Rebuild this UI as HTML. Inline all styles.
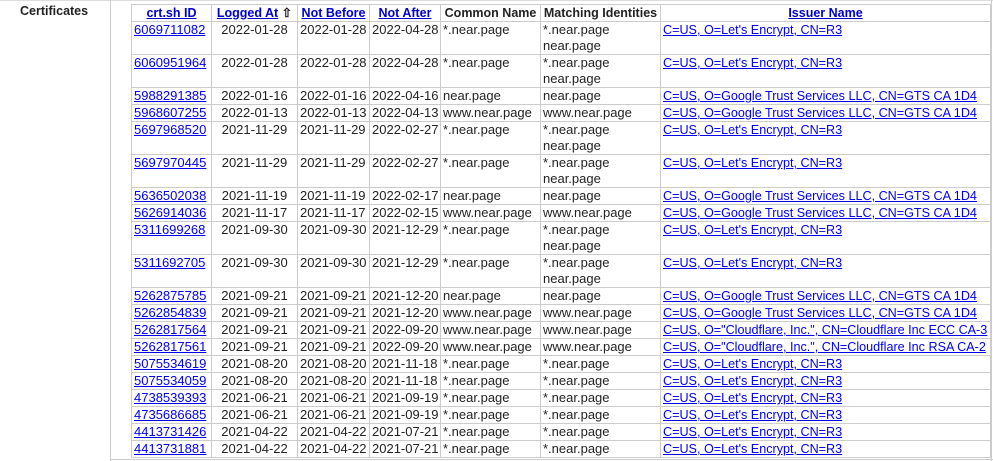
<!DOCTYPE html>
<html><head><meta charset="utf-8"><style>
html,body{margin:0;padding:0;background:#fff;}
body{width:993px;height:461px;position:relative;overflow:hidden;font-family:"Liberation Sans",Arial,sans-serif;font-size:13px;color:#222;}
.topline{position:absolute;left:0;top:0;width:993px;height:1px;background:#ddd;}
.vline{position:absolute;left:110px;top:0;width:1px;height:461px;background:#ccc;}
.rline{position:absolute;left:991px;top:0;width:1px;height:461px;background:#ccc;}
.bline{position:absolute;left:110px;top:459px;width:883px;height:1px;background:#ccc;}
.lbl{position:absolute;left:20px;top:4px;font-weight:bold;font-size:12.5px;}
table{position:absolute;left:131px;top:4px;border-collapse:collapse;table-layout:fixed;width:859px;}
td,th{border:1px solid #ccc;padding:0 2px;line-height:16px;vertical-align:top;white-space:nowrap;overflow:hidden;}
th{height:16px;font-weight:bold;font-size:12.5px;}
th a{color:#00c;}
a{color:#00e;text-decoration:underline;}
tr.s td{height:16px;}
tr.d td{height:32px;}
td.c{text-align:center;}
td:last-child{font-size:12.6px;}
</style></head><body>
<div class="topline"></div><div class="vline"></div><div class="rline"></div><div class="bline"></div>
<div class="lbl">Certificates</div>
<table>
<colgroup><col style="width:80px"><col style="width:86px"><col style="width:72px"><col style="width:71px"><col style="width:100px"><col style="width:120px"><col style="width:330px"></colgroup>
<tr><th><a>crt.sh ID</a></th><th><a>Logged At</a> &#8679;</th><th><a>Not Before</a></th><th><a>Not After</a></th><th>Common Name</th><th>Matching Identities</th><th><a>Issuer Name</a></th></tr>
<tr class="d"><td><a>6069711082</a></td><td class="c">2022-01-28</td><td>2022-01-28</td><td>2022-04-28</td><td>*.near.page</td><td>*.near.page<br>near.page</td><td><a>C=US, O=Let's Encrypt, CN=R3</a></td></tr>
<tr class="d"><td><a>6060951964</a></td><td class="c">2022-01-28</td><td>2022-01-28</td><td>2022-04-28</td><td>*.near.page</td><td>*.near.page<br>near.page</td><td><a>C=US, O=Let's Encrypt, CN=R3</a></td></tr>
<tr class="s"><td><a>5988291385</a></td><td class="c">2022-01-16</td><td>2022-01-16</td><td>2022-04-16</td><td>near.page</td><td>near.page</td><td><a>C=US, O=Google Trust Services LLC, CN=GTS CA 1D4</a></td></tr>
<tr class="s"><td><a>5968607255</a></td><td class="c">2022-01-13</td><td>2022-01-13</td><td>2022-04-13</td><td>www.near.page</td><td>www.near.page</td><td><a>C=US, O=Google Trust Services LLC, CN=GTS CA 1D4</a></td></tr>
<tr class="d"><td><a>5697968520</a></td><td class="c">2021-11-29</td><td>2021-11-29</td><td>2022-02-27</td><td>*.near.page</td><td>*.near.page<br>near.page</td><td><a>C=US, O=Let's Encrypt, CN=R3</a></td></tr>
<tr class="d"><td><a>5697970445</a></td><td class="c">2021-11-29</td><td>2021-11-29</td><td>2022-02-27</td><td>*.near.page</td><td>*.near.page<br>near.page</td><td><a>C=US, O=Let's Encrypt, CN=R3</a></td></tr>
<tr class="s"><td><a>5636502038</a></td><td class="c">2021-11-19</td><td>2021-11-19</td><td>2022-02-17</td><td>near.page</td><td>near.page</td><td><a>C=US, O=Google Trust Services LLC, CN=GTS CA 1D4</a></td></tr>
<tr class="s"><td><a>5626914036</a></td><td class="c">2021-11-17</td><td>2021-11-17</td><td>2022-02-15</td><td>www.near.page</td><td>www.near.page</td><td><a>C=US, O=Google Trust Services LLC, CN=GTS CA 1D4</a></td></tr>
<tr class="d"><td><a>5311699268</a></td><td class="c">2021-09-30</td><td>2021-09-30</td><td>2021-12-29</td><td>*.near.page</td><td>*.near.page<br>near.page</td><td><a>C=US, O=Let's Encrypt, CN=R3</a></td></tr>
<tr class="d"><td><a>5311692705</a></td><td class="c">2021-09-30</td><td>2021-09-30</td><td>2021-12-29</td><td>*.near.page</td><td>*.near.page<br>near.page</td><td><a>C=US, O=Let's Encrypt, CN=R3</a></td></tr>
<tr class="s"><td><a>5262875785</a></td><td class="c">2021-09-21</td><td>2021-09-21</td><td>2021-12-20</td><td>near.page</td><td>near.page</td><td><a>C=US, O=Google Trust Services LLC, CN=GTS CA 1D4</a></td></tr>
<tr class="s"><td><a>5262854839</a></td><td class="c">2021-09-21</td><td>2021-09-21</td><td>2021-12-20</td><td>www.near.page</td><td>www.near.page</td><td><a>C=US, O=Google Trust Services LLC, CN=GTS CA 1D4</a></td></tr>
<tr class="s"><td><a>5262817564</a></td><td class="c">2021-09-21</td><td>2021-09-21</td><td>2022-09-20</td><td>www.near.page</td><td>www.near.page</td><td><a>C=US, O="Cloudflare, Inc.", CN=Cloudflare Inc ECC CA-3</a></td></tr>
<tr class="s"><td><a>5262817561</a></td><td class="c">2021-09-21</td><td>2021-09-21</td><td>2022-09-20</td><td>www.near.page</td><td>www.near.page</td><td><a>C=US, O="Cloudflare, Inc.", CN=Cloudflare Inc RSA CA-2</a></td></tr>
<tr class="s"><td><a>5075534619</a></td><td class="c">2021-08-20</td><td>2021-08-20</td><td>2021-11-18</td><td>*.near.page</td><td>*.near.page</td><td><a>C=US, O=Let's Encrypt, CN=R3</a></td></tr>
<tr class="s"><td><a>5075534059</a></td><td class="c">2021-08-20</td><td>2021-08-20</td><td>2021-11-18</td><td>*.near.page</td><td>*.near.page</td><td><a>C=US, O=Let's Encrypt, CN=R3</a></td></tr>
<tr class="s"><td><a>4738539393</a></td><td class="c">2021-06-21</td><td>2021-06-21</td><td>2021-09-19</td><td>*.near.page</td><td>*.near.page</td><td><a>C=US, O=Let's Encrypt, CN=R3</a></td></tr>
<tr class="s"><td><a>4735686685</a></td><td class="c">2021-06-21</td><td>2021-06-21</td><td>2021-09-19</td><td>*.near.page</td><td>*.near.page</td><td><a>C=US, O=Let's Encrypt, CN=R3</a></td></tr>
<tr class="s"><td><a>4413731426</a></td><td class="c">2021-04-22</td><td>2021-04-22</td><td>2021-07-21</td><td>*.near.page</td><td>*.near.page</td><td><a>C=US, O=Let's Encrypt, CN=R3</a></td></tr>
<tr class="s"><td><a>4413731881</a></td><td class="c">2021-04-22</td><td>2021-04-22</td><td>2021-07-21</td><td>*.near.page</td><td>*.near.page</td><td><a>C=US, O=Let's Encrypt, CN=R3</a></td></tr>
</table>
</body></html>
